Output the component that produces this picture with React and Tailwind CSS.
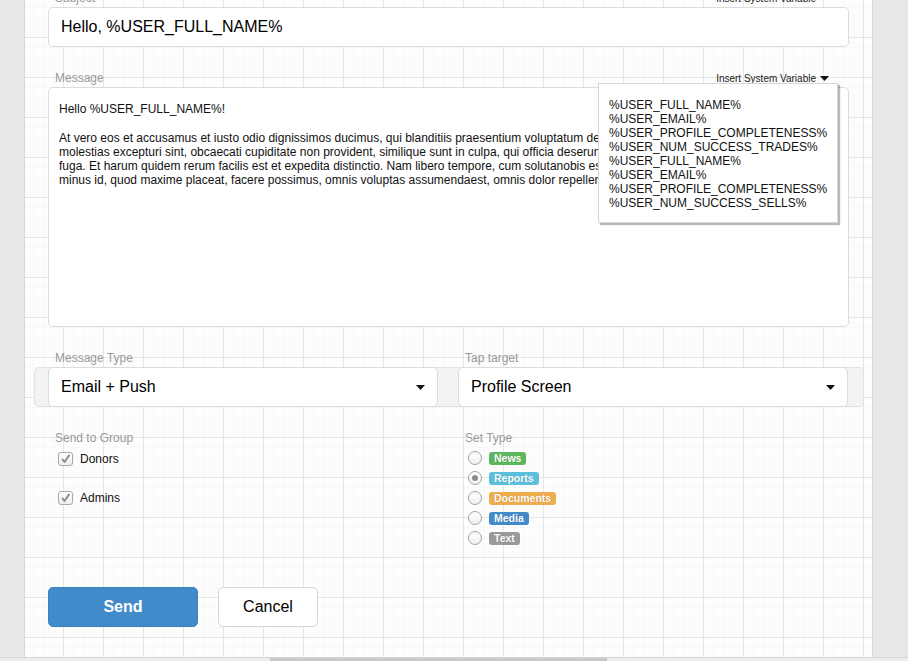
import { useState } from "react";

const variables = [
  "%USER_FULL_NAME%",
  "%USER_EMAIL%",
  "%USER_PROFILE_COMPLETENESS%",
  "%USER_NUM_SUCCESS_TRADES%",
  "%USER_FULL_NAME%",
  "%USER_EMAIL%",
  "%USER_PROFILE_COMPLETENESS%",
  "%USER_NUM_SUCCESS_SELLS%",
];

const bodyLines = [
  "At vero eos et accusamus et iusto odio dignissimos ducimus, qui blanditiis praesentium voluptatum deleniti atque corrupti quos dolores et quas",
  "molestias excepturi sint, obcaecati cupiditate non provident, similique sunt in culpa, qui officia deserunt mollitia animi, id est laborum et dolorum",
  "fuga. Et harum quidem rerum facilis est et expedita distinctio. Nam libero tempore, cum solutanobis est eligendi optio cumque nihil impedit quo",
  "minus id, quod maxime placeat, facere possimus, omnis voluptas assumendaest, omnis dolor repellendus.",
];

const types = [
  { name: "News", color: "bg-[#5cb85c]" },
  { name: "Reports", color: "bg-[#5bc0de]" },
  { name: "Documents", color: "bg-[#f0ad4e]" },
  { name: "Media", color: "bg-[#428bca]" },
  { name: "Text", color: "bg-[#999999]" },
];

const Caret = ({ w = 9, h = 5, className = "" }) => (
  <svg width={w} height={h} viewBox="0 0 9 5" className={`shrink-0 ${className}`}>
    <path d="M0 0 L9 0 L4.5 5 Z" fill="#111" />
  </svg>
);

const InsertVariable = ({ showCaret = true }) => (
  <div className="flex items-center gap-[4px] text-[10px] text-[#222]">
    <span>Insert System Variable</span>
    <Caret w={9} h={5} className={showCaret ? "" : "invisible"} />
  </div>
);

const Label = ({ children }) => (
  <div className="pl-[7px] text-[12px] leading-4 text-[#999]">{children}</div>
);

const Select = ({ value }) => (
  <div className="flex h-[40px] items-center justify-between rounded-[5px] border border-[#dcdcdc] bg-white pl-[12px] pr-[12px] text-[16px] text-black">
    <span>{value}</span>
    <Caret />
  </div>
);

const Checkbox = ({ label }) => (
  <div className="flex h-[20px] items-center gap-[7px] pl-[10px]">
    <div className="flex h-[14px] w-[15px] items-center justify-center rounded-[3px] border border-[#a8a8a8] bg-[linear-gradient(#ffffff,#ededed)]">
      <svg width="11" height="10" viewBox="0 0 11 10">
        <path d="M2.5 5.5 L4.5 8 L9 1.5" fill="none" stroke="#8a8a8a" strokeWidth="2" strokeLinecap="round" strokeLinejoin="round" />
      </svg>
    </div>
    <span className="text-[12px] text-[#111]">{label}</span>
  </div>
);

const Radio = ({ checked, name, color }) => (
  <div className="flex h-[20px] items-center gap-[7px] pl-[10px]">
    <div className="flex h-[14px] w-[14px] items-center justify-center rounded-full border border-[#a3a3a3] bg-[linear-gradient(#ffffff,#f0f0f0)]">
      {checked && <div className="h-[6px] w-[6px] rounded-full bg-[#8c8c8c]" />}
    </div>
    <span
      className={`${color} rounded-[3px] px-[5px] text-[10.5px] font-bold leading-[13px] text-white [text-shadow:0_0_1px_rgba(0,0,0,0.25)]`}
    >
      {name}
    </span>
  </div>
);

export default function App() {
  const [selected] = useState("Reports");

  return (
    <div className="flex h-[661px] w-full flex-col overflow-hidden bg-[#e8e8e8] font-['Liberation_Sans',Arial,sans-serif]">
      <div className="flex min-h-0 flex-1">
        <div className="w-[24px] shrink-0" />
        <div className="flex w-[849px] shrink-0 flex-col border-x border-[#d8d8d8] bg-[#fdfdfd] bg-[linear-gradient(#e6e6e6_1px,transparent_1px),linear-gradient(90deg,#e6e6e6_1px,transparent_1px),linear-gradient(#f8f8f8_1px,transparent_1px),linear-gradient(90deg,#f8f8f8_1px,transparent_1px)] bg-[size:40px_40px,40px_40px,10px_10px,10px_10px] bg-[position:38px_37px] px-[23px]">
          {/* subject */}
          <div className="-mt-[10px] flex h-[16px] items-center justify-between pr-[20px]">
            <Label>Subject</Label>
            <InsertVariable showCaret={false} />
          </div>
          <div className="mt-px flex h-[40px] items-center rounded-[5px] border border-[#dcdcdc] bg-white pl-[12px] text-[16px] text-black">
            Hello, %USER_FULL_NAME%
          </div>

          {/* message */}
          <div className="relative mt-[23px]">
            <div className="flex h-[16px] items-center justify-between pr-[20px]">
              <Label>Message</Label>
              <InsertVariable />
            </div>
            <div className="mt-px h-[240px] overflow-hidden rounded-[5px] border border-[#dcdcdc] bg-white pl-[10px] pt-[14px] text-[12px] leading-[14px] text-[#111]">
              <div>Hello %USER_FULL_NAME%!</div>
              <div className="h-[15px]" />
              {bodyLines.map((line, i) => (
                <div key={i} className="whitespace-pre">
                  {line}
                </div>
              ))}
            </div>
            <div className="absolute left-[550px] top-[13px] h-[140px] w-[240px] border border-[#d6d6d6] bg-white pl-[10px] pt-[14px] text-[12px] leading-[14px] text-[#111] shadow-[2px_2px_1px_rgba(0,0,0,0.28)]">
              {variables.map((v, i) => (
                <div key={i}>{v}</div>
              ))}
            </div>
          </div>

          {/* message type / tap target */}
          <div className="mt-[23px] grid grid-cols-[390px_390px] gap-x-[20px]">
            <Label>Message Type</Label>
            <Label>Tap target</Label>
          </div>
          <div className="-ml-[14px] -mr-[15px] mt-px grid grid-cols-[390px_390px] gap-x-[20px] rounded-[5px] border border-[#e0e0e0] bg-[#f3f3f3] pl-[13px] pr-[14px] [&>div]:-my-px">
            <Select value="Email + Push" />
            <Select value="Profile Screen" />
          </div>

          {/* groups / type */}
          <div className="mt-[23px] grid grid-cols-[390px_390px] gap-x-[20px]">
            <div>
              <Label>Send to Group</Label>
              <div className="mt-[3px] flex flex-col gap-[19px]">
                <Checkbox label="Donors" />
                <Checkbox label="Admins" />
              </div>
            </div>
            <div>
              <Label>Set Type</Label>
              <div className="mt-[2px] flex flex-col">
                {types.map((t) => (
                  <Radio key={t.name} name={t.name} color={t.color} checked={t.name === selected} />
                ))}
              </div>
            </div>
          </div>

          {/* buttons */}
          <div className="mt-[39px] flex gap-[20px]">
            <button className="h-[40px] w-[150px] rounded-[5px] border border-[#3a83c3] bg-[#428bca] text-[16px] font-bold text-white">
              Send
            </button>
            <button className="h-[40px] w-[100px] rounded-[5px] border border-[#d8d8d8] bg-white text-[16px] text-black">
              Cancel
            </button>
          </div>
        </div>
        <div className="flex-1" />
      </div>
      <div className="flex h-[4px] shrink-0 border-t border-[#d6d6d6] bg-[#ececec]">
        <div className="ml-[270px] h-full w-[337px] bg-[#c9c9c9]" />
      </div>
    </div>
  );
}
